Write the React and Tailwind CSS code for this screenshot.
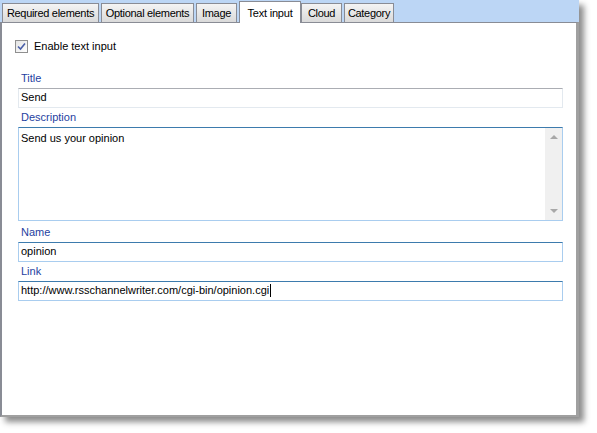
import React from "react";

const font = { fontFamily: '"Liberation Sans", Arial, sans-serif' };

function Tab({ label, selected, w }) {
  if (selected) {
    return (
      <div className={"relative z-10 -mb-px mr-[-2px] flex h-[22px] shrink-0 items-start justify-center border border-b-0 border-[#898c95] bg-white pt-[3px] text-[11px] tracking-[-0.2px] text-black " + w}>
        {label}
      </div>
    );
  }
  return (
    <div className={"flex h-[19px] shrink-0 items-center justify-center border border-b-0 border-[#898c95] bg-gradient-to-b from-[#f4f4f4] to-[#dadada] pt-[1px] text-[11px] tracking-[-0.3px] text-black " + w}>
      {label}
    </div>
  );
}

function Label({ children }) {
  return <div className="pl-[3px] text-[11px] leading-[14px] text-[#1f3f9f]">{children}</div>;
}

function Input({ value, focused, caret }) {
  return (
    <div
      className={
        "flex h-[20px] items-center border px-[2px] text-[11px] text-black " +
        (focused
          ? "border-[#a9cdef] border-t-[#3d7bad]"
          : "border-[#e3e9ef] border-t-[#abadb3]")
      }
    >
      <span>{value}</span>
      {caret && <span className="ml-[1px] inline-block h-[13px] w-px bg-black" />}
    </div>
  );
}

export default function App() {
  return (
    <div className="h-[433px] w-[597px] overflow-hidden bg-white" style={font}>
      <div className="flex h-[417px] w-[579px] flex-col shadow-[5px_5px_6px_rgba(0,0,0,0.45)]">
        <div className="flex h-[22px] shrink-0 items-end gap-[2px] bg-[#bcd6f5] pl-[2px] pr-[2px]">
          <Tab label="Required elements" w="w-[97px]" />
          <Tab label="Optional elements" w="w-[93px]" />
          <Tab label="Image" w="w-[41px]" />
          <Tab label="Text input" selected w="w-[62px]" />
          <Tab label="Cloud" w="w-[41px]" />
          <Tab label="Category" w="w-[50px]" />
        </div>
        <div className="flex flex-1 flex-col border-l-2 border-r-[3px] border-b-2 border-t border-[#898c95] border-r-[#a0a0a0] border-b-[#a0a0a0] bg-white pl-[16px] pr-[13px]">
          <div className="ml-[-3px] mt-[15px] flex items-center gap-[6px]">
            <div className="flex h-[13px] w-[13px] items-center justify-center border border-[#8f8f8f] bg-gradient-to-br from-[#e4e4e4] to-[#ffffff]">
              <svg width="9" height="9" viewBox="0 0 9 9">
                <path d="M1 4.5 L3.5 7 L8 1.5" fill="none" stroke="#4a5fa8" strokeWidth="1.6" />
              </svg>
            </div>
            <span className="text-[11px] text-black">Enable text input</span>
          </div>
          <div className="mt-[16px] flex flex-col">
            <Label>Title</Label>
            <div className="mt-[3px]">
              <Input value="Send" />
            </div>
            <div className="mt-[2px]">
              <Label>Description</Label>
            </div>
            <div className="mt-[3px] flex h-[94px] border border-[#a9cdef] border-t-[#3d7bad]">
              <div className="flex-1 px-[2px] pt-[2px] text-[11px] text-black">Send us your opinion</div>
              <div className="flex w-[17px] flex-col items-center justify-between bg-[#f0f0f0] py-[6px]">
                <svg width="8" height="5" viewBox="0 0 8 5">
                  <path d="M0 5 L4 1 L8 5 Z" fill="#a8a8a8" />
                </svg>
                <svg width="8" height="5" viewBox="0 0 8 5">
                  <path d="M0 0 L4 4 L8 0 Z" fill="#a8a8a8" />
                </svg>
              </div>
            </div>
            <div className="mt-[4px]">
              <Label>Name</Label>
            </div>
            <div className="mt-[3px]">
              <Input value="opinion" focused />
            </div>
            <div className="mt-[2px]">
              <Label>Link</Label>
            </div>
            <div className="mt-[3px]">
              <Input value="http://www.rsschannelwriter.com/cgi-bin/opinion.cgi" focused caret />
            </div>
          </div>
        </div>
      </div>
    </div>
  );
}
